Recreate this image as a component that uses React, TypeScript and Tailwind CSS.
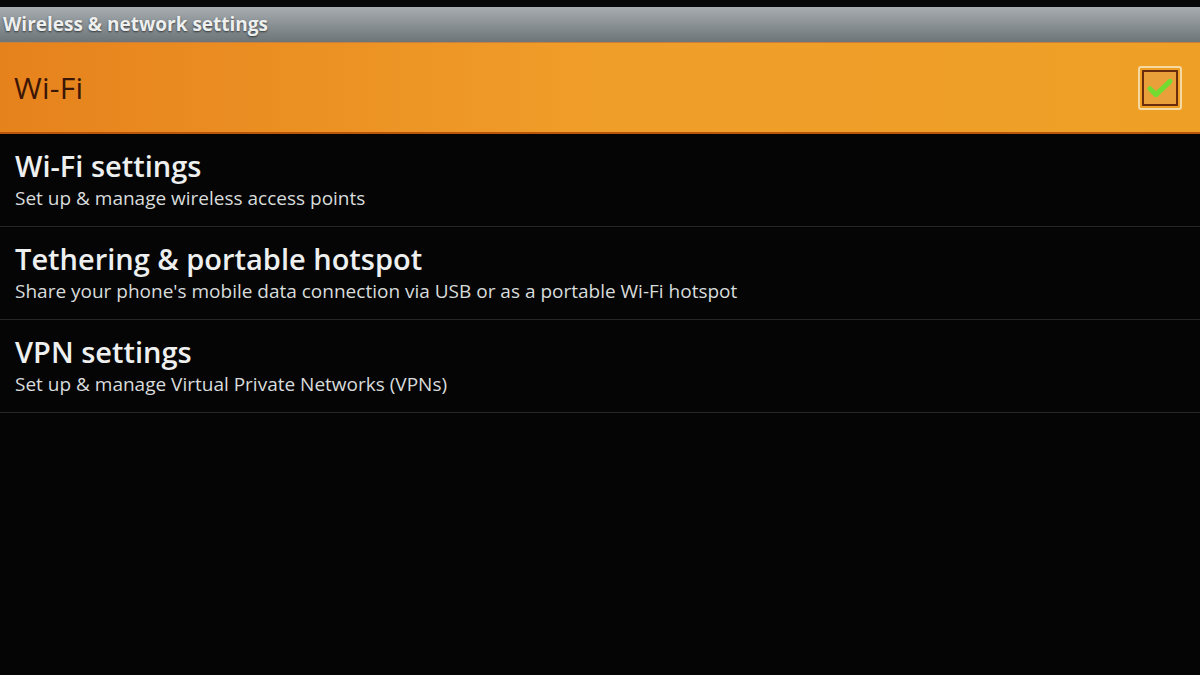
const rows = [
  { title: 'Wi-Fi settings', sub: 'Set up & manage wireless access points' },
  { title: 'Tethering & portable hotspot', sub: "Share your phone's mobile data connection via USB or as a portable Wi-Fi hotspot" },
  { title: 'VPN settings', sub: 'Set up & manage Virtual Private Networks (VPNs)' },
]

function CheckBox() {
  return (
    <div className="w-[44px] h-[44px] rounded-[3px] border-2 border-[#f6d9a0] p-[2px]">
      <div className="w-full h-full border-2 border-[#6a2c0c] bg-[#e9a03a] flex items-center justify-center">
        <svg viewBox="0 0 24 24" className="w-[34px] h-[34px]">
          <path d="M4.5 12.5l4.5 4.5L19.5 7" fill="none" stroke="#72dc30" strokeWidth="3.8" strokeLinecap="round" strokeLinejoin="round" />
        </svg>
      </div>
    </div>
  )
}

export default function App() {
  return (
    <main className="w-[1200px] h-[675px] bg-[#050505] flex flex-col overflow-hidden" style={{ fontFamily: '"Open Sans", "DejaVu Sans", sans-serif' }}>
      <div className="h-[7px] bg-[#080808]" />

      {/* Title bar */}
      <div className="h-[35px] bg-gradient-to-b from-[#a7adb1] to-[#6e7579] flex items-center px-[3px]">
        <span className="text-[19px] font-bold text-[#eef0f0] [text-shadow:0_1px_2px_rgba(0,0,0,0.6)]">
          Wireless &amp; network settings
        </span>
      </div>

      {/* Selected row */}
      <div className="h-[92px] bg-gradient-to-r from-[#e6821c] via-[#f09e2a] to-[#eea026] border-t border-[#c9803a] border-b-2 border-b-[#b8560c] flex items-center justify-between pl-[14px] pr-[18px]">
        <span className="text-[30px] text-[#3c1606] tracking-[0.3px]">Wi-Fi</span>
        <CheckBox />
      </div>

      {rows.map((r) => (
        <div key={r.title} className="h-[93px] border-b border-[#262626] flex flex-col justify-center pl-[15px] pb-[2px]">
          <span className="text-[29px] leading-[34px] font-semibold text-[#eef0f0]">{r.title}</span>
          <span className="text-[19px] leading-[24px] mt-[3px] text-[#d8dcdc]">{r.sub}</span>
        </div>
      ))}
    </main>
  )
}
